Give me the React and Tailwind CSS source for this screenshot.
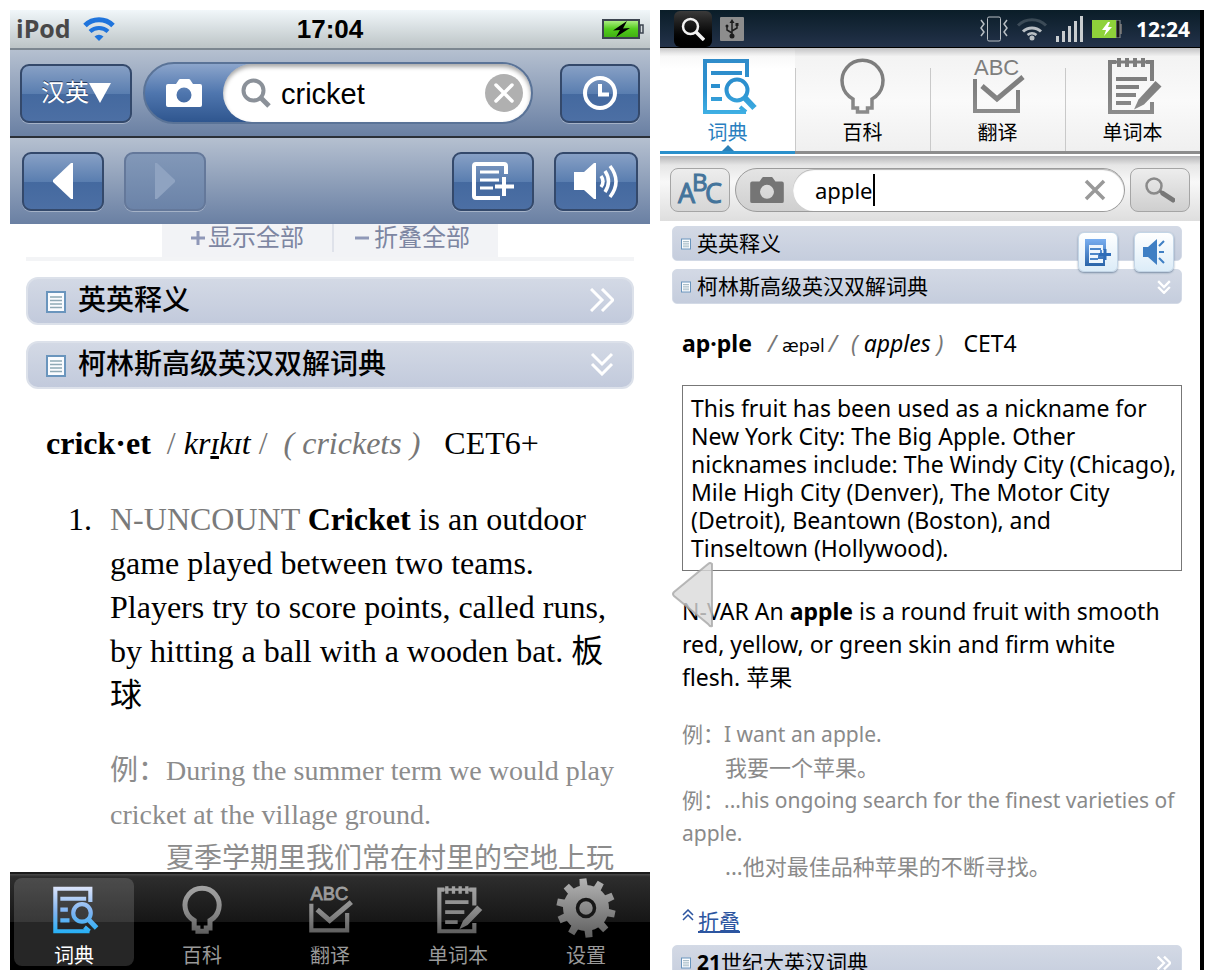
import { useId, useState } from "react";
import clsx from "clsx";

/* ---------- Icons ---------- */

const TONES = {
  glow: ["#dfe6fb", "#7fb4f2", "#27b0f5"],
  dim: ["#a3a3a3", "#8a8a8a", "#5f5f5f"],
  blue: ["#2f8bc9", "#2b90cf", "#3fb0e4"],
  steel: ["#7c7c7c", "#808080", "#8c8c8c"],
};

const TabIcon = ({ tone, className, children }) => {
  const id = useId();
  const [from, via, to] = TONES[tone];
  return (
    <svg viewBox="-2 0 54 57" fill="none" className={clsx("overflow-visible", className)} aria-hidden="true">
      <defs>
        <linearGradient id={id} gradientUnits="userSpaceOnUse" x1="0" y1="0" x2="0" y2="56">
          <stop offset="0" stopColor={from} />
          <stop offset="0.55" stopColor={via} />
          <stop offset="1" stopColor={to} />
        </linearGradient>
      </defs>
      {children(`url(#${id})`)}
    </svg>
  );
};

const DictIcon = ({ bold, ...props }) => (
  <TabIcon {...props}>
    {(paint) => (
      <g stroke={paint} strokeWidth={bold ? 5 : 4}>
        <path d="M44 19V3H2v51h41" />
        <path d="M37 49l6 5M8 15h31M8 28h9M8 41h11" />
        <circle cx="34" cy="32" r="10.5" />
        <path d="M41.5 39.5L51.5 50" strokeWidth="6" />
      </g>
    )}
  </TabIcon>
);

const BulbIcon = ({ bold, ...props }) => (
  <TabIcon {...props}>
    {(paint) => (
      <path
        d="M15 50v-9A20.500 20.500 0 1 1 34 41v9h-4.500v4h-10v-4z"
        stroke={paint}
        strokeWidth={bold ? 6 : 3.5}
      />
    )}
  </TabIcon>
);

const TranslateIcon = ({ bold, ...props }) => (
  <TabIcon {...props}>
    {(paint) => (
      <>
        <text
          x="1"
          y="17"
          fill={paint}
          stroke={bold ? paint : "none"}
          strokeWidth="1"
          fontSize="22"
          fontFamily="Liberation Sans, Arial, sans-serif"
        >
          ABC
        </text>
        <path d="M2 21v32h43V32" stroke={paint} strokeWidth={bold ? 5 : 4} />
        <path d="M9 28l15 13L50 19" stroke={paint} strokeWidth={bold ? 6 : 5} />
      </>
    )}
  </TabIcon>
);

const NotebookIcon = ({ bold, ...props }) => (
  <TabIcon {...props}>
    {(paint) => (
      <g stroke={paint} strokeWidth={bold ? 5 : 4}>
        <path d="M8 4H2v50h42V44M38 4h6v19" />
        <path d="M11 0v9M19 0v9M27 0v9M35 0v9" strokeWidth="4" />
        <path d="M8 4h32" strokeWidth="3" />
        {bold ? (
          <path d="M9 19h28M9 31h23M9 43h15" strokeWidth="4.500" />
        ) : (
          <path d="M8 21h31M8 29h23M8 37h20M8 45h15" strokeWidth="4" />
        )}
        <path d="M47.500 23l6 5.500L36 46.500l-10 5 4.500-10z" fill={paint} stroke="none" />
      </g>
    )}
  </TabIcon>
);

const TEETH = [-6, 30, 66, 102, 138, 174, 210, 246, 282, 318];

const GearIcon = ({ className }) => (
  <svg viewBox="0 0 60 60" className={className} aria-hidden="true">
    <defs>
      <linearGradient id="gear" gradientUnits="userSpaceOnUse" x1="0" y1="0" x2="0" y2="60">
        <stop offset="0" stopColor="#b4b4b4" />
        <stop offset="1" stopColor="#5e5e5e" />
      </linearGradient>
      <mask id="gear-teeth">
        <circle cx="30" cy="30" r="23" fill="#fff" />
        {TEETH.map((angle) => (
          <path key={angle} d="M26 10l.500-9.500h7L34 10z" fill="#fff" transform={`rotate(${angle} 30 30)`} />
        ))}
      </mask>
    </defs>
    <rect width="60" height="60" fill="url(#gear)" mask="url(#gear-teeth)" />
    <circle cx="30" cy="30" r="8.500" fill="none" stroke="#171717" strokeWidth="3.500" />
  </svg>
);

const CameraIcon = ({ className }) => (
  <svg viewBox="0 0 36 30" className={className} fill="currentColor" aria-hidden="true">
    <path
      fillRule="evenodd"
      d="M10 6l3-4.500Q13.500 1 14 1h9q.500 0 1 .500L27 6h7q2 0 2 2v19q0 2-2 2H2q-2 0-2-2V8q0-2 2-2zM18 9.500a7.500 7.500 0 1 0 0 15 7.500 7.500 0 0 0 0-15z"
    />
  </svg>
);

const WifiIcon = ({ className, faded }) => (
  <svg viewBox="0 0 32 24" className={className} fill="none" stroke="currentColor" aria-hidden="true">
    <path d="M2 8.500a20 20 0 0 1 28 0" strokeWidth={faded ? 3 : 5} opacity={faded ? 0.25 : 1} />
    <path d="M7 14.500a13 13 0 0 1 18 0" strokeWidth={faded ? 3 : 4} />
    {faded ? (
      <>
        <path d="M11.500 18a7 7 0 0 1 9 0" strokeWidth="2.500" />
        <circle cx="16" cy="21" r="2.500" fill="currentColor" stroke="none" />
      </>
    ) : (
      <path d="M16 24l-4.500-4.500a7 7 0 0 1 9 0z" fill="currentColor" stroke="none" />
    )}
  </svg>
);

const SheetIcon = ({ className }) => (
  <svg viewBox="0 0 20 22" className={className} fill="none" aria-hidden="true">
    <rect x="1" y="1" width="18" height="20" fill="#fafcff" stroke="#6a95bd" strokeWidth="2" />
    <path d="M4 6h12M4 9.500h12M4 13h12M4 16.500h12" stroke="#8fa9b5" strokeWidth="1.500" />
  </svg>
);

const DoubleChevron = ({ className, direction }) => (
  <svg viewBox="0 0 24 24" className={className} fill="none" stroke="currentColor" aria-hidden="true">
    {direction === "right" && <path d="M1 1l11 11L1 23M12 1l11 11-11 11" />}
    {direction === "down" && <path d="M2 2l10 10L22 2M2 12l10 10 10-10" />}
    {direction === "up" && <path d="M2 12L12 2l10 10M2 22l10-10 10 10" />}
  </svg>
);

const AddNoteIcon = ({ className }) => (
  <svg viewBox="0 0 42 38" className={className} fill="none" stroke="currentColor" aria-hidden="true">
    <path d="M34 12V4q0-2-2-2H4Q2 2 2 4v30q0 2 2 2h24" strokeWidth="4" />
    <path d="M8 10h19M8 18h19M8 26h13" strokeWidth="3" />
    <path d="M32 15v19M23 24.500h19" strokeWidth="4" />
  </svg>
);

/* ---------- Left phone ---------- */

const GlossyButton = ({ label, disabled, className, children }) => (
  <button
    aria-label={label}
    disabled={disabled}
    className={clsx(
      "flex h-[59px] shrink-0 items-center justify-center rounded-[9px] border-2 shadow-[0_1px_0_rgba(255,255,255,0.35)]",
      disabled
        ? "border-[#64789a] bg-linear-to-b from-[#8298b8] to-[#6b83a8] text-[#8fa3c1]"
        : "border-[#34496b] bg-[linear-gradient(#87a0c5,#5a7eb0_50%,#44699f_50%,#4c6fa4)] text-white",
      className
    )}
  >
    {children}
  </button>
);

const Triangle = ({ flip, className }) => (
  <svg viewBox="0 0 20 36" className={clsx(className, flip && "rotate-180")} fill="currentColor" aria-hidden="true">
    <path d="M20 0v36h-2L0 19v-2L18 0z" />
  </svg>
);

const SectionBar = ({ title, direction }) => (
  <button className="flex h-12 w-full items-center rounded-xl border-2 border-[#dce1ea] bg-linear-to-b from-[#d3d9e5] to-[#c2cadc] px-[18px] text-left text-[28px] text-black">
    <SheetIcon className="mt-0.5 mr-3 h-[22px] w-5" />
    <span className="flex-1 leading-9 font-medium">{title}</span>
    <DoubleChevron direction={direction} className="mb-0.5 size-6 stroke-3 text-white" />
  </button>
);

const LEFT_TABS = [
  { name: "词典", Icon: DictIcon },
  { name: "百科", Icon: BulbIcon },
  { name: "翻译", Icon: TranslateIcon },
  { name: "单词本", Icon: NotebookIcon },
];

const IpodPhone = () => {
  const [word, setWord] = useState("cricket");

  return (
    <section className="flex min-w-0 flex-col overflow-hidden bg-white font-['Liberation_Sans','Noto_Sans_CJK_SC',sans-serif]">
      {/* Status bar */}
      <div className="grid h-10 shrink-0 grid-cols-3 items-center border-b-2 border-[#7c8790] bg-linear-to-b from-[#f1f7fa] to-[#bcc4c6] px-1.5">
        <div className="flex items-center gap-3">
          <span className="pb-0.5 font-['Open_Sans',sans-serif] text-[25px] leading-9 font-bold text-[#484848]">iPod</span>
          <WifiIcon className="h-6 w-8 text-[#1f74dc]" />
        </div>
        <span className="text-center text-[26px] leading-9 font-bold">17:04</span>
        <svg viewBox="0 0 42 20" className="h-5 w-[42px] justify-self-end" aria-hidden="true">
          <defs>
            <linearGradient id="cell" x1="0" y1="0" x2="0" y2="1">
              <stop offset="0" stopColor="#b5f08c" />
              <stop offset="0.5" stopColor="#52cc1c" />
              <stop offset="1" stopColor="#3fae12" />
            </linearGradient>
          </defs>
          <rect x="1" y="1" width="36" height="18" fill="url(#cell)" stroke="#3c4450" strokeWidth="2" />
          <rect x="38" y="6" width="3" height="8" fill="#d8dee0" stroke="#3c4450" strokeWidth="1.500" />
          <path d="M25 2L11 11.500l7-.500-4 7 14-9-7 .500z" fill="#000" />
        </svg>
      </div>

      {/* Search bar */}
      <div className="flex h-[88px] shrink-0 items-center border-b-2 border-[#2b3038] bg-linear-to-b from-[#b5c0d0] to-[#6a80a3] px-2.5">
        <GlossyButton className="w-28 text-2xl">
          <span className="[text-shadow:0_-1px_0_#24385a]">汉英</span>
          <svg viewBox="0 0 22 20" className="h-5 w-[22px]" fill="currentColor" aria-hidden="true">
            <path d="M0 0h22L11 20z" />
          </svg>
        </GlossyButton>
        <form className="mr-[27px] ml-[11px] flex h-[62px] min-w-0 flex-1 rounded-full border-2 border-[#5a7397] bg-linear-to-b from-[#8ca5cb] via-[#4f76ae] to-[#2f568f]">
          <button type="button" aria-label="拍照" className="flex w-[78px] shrink-0 items-center justify-center text-white">
            <CameraIcon className="h-[30px] w-9" />
          </button>
          <label className="flex min-w-0 flex-1 items-center gap-2.5 rounded-full bg-white pr-2 pl-[18px] shadow-[inset_0_3px_4px_rgba(0,0,0,0.35)]">
            <svg viewBox="0 0 30 30" className="size-[30px] shrink-0" fill="none" stroke="#8b9199" aria-hidden="true">
              <circle cx="12.500" cy="12.500" r="10" strokeWidth="4" />
              <path d="M19.500 19.500L28 28" strokeWidth="5" />
            </svg>
            <input
              aria-label="查词"
              value={word}
              onChange={(e) => setWord(e.target.value)}
              className="w-full min-w-0 bg-transparent pt-0.5 text-[29px] leading-9 text-black outline-none"
            />
            <button type="button" aria-label="清除" onClick={() => setWord("")}>
              <svg viewBox="0 0 38 38" className="size-[38px]" fill="none" aria-hidden="true">
                <circle cx="19" cy="19" r="19" fill="#b0b0b0" />
                <path d="M11 11l16 16M27 11L11 27" stroke="#fff" strokeWidth="3.500" strokeLinecap="round" />
              </svg>
            </button>
          </label>
        </form>
        <GlossyButton label="历史" className="w-20">
          <svg viewBox="0 0 34 34" className="size-[34px]" fill="none" stroke="currentColor" aria-hidden="true">
            <circle cx="17" cy="17" r="15" strokeWidth="4" />
            <path d="M17 8v10.500h9" strokeWidth="4" />
          </svg>
        </GlossyButton>
      </div>

      {/* Word toolbar */}
      <div className="flex h-[86px] shrink-0 items-center gap-5 bg-linear-to-b from-[#b5c0d0] to-[#6a80a3] px-3">
        <GlossyButton label="后退" className="w-[82px]">
          <Triangle className="h-9 w-5" />
        </GlossyButton>
        <GlossyButton label="前进" disabled className="w-[82px]">
          <Triangle flip className="h-9 w-5" />
        </GlossyButton>
        <div className="flex-1" />
        <GlossyButton label="加入单词本" className="w-[82px]">
          <AddNoteIcon className="h-[38px] w-[42px]" />
        </GlossyButton>
        <GlossyButton label="发音" className="w-[84px]">
          <svg viewBox="0 0 44 38" className="h-[38px] w-11" fill="none" stroke="currentColor" aria-hidden="true">
            <path d="M0 10h10L20 1h2v36h-2L10 28H0z" fill="currentColor" stroke="none" />
            <path d="M27 14q4 5.500 0 11M31 9q7 10.500 0 21M36 4q12 15.500 0 31" strokeWidth="3.500" />
          </svg>
        </GlossyButton>
      </div>

      {/* Article */}
      <main className="min-h-0 flex-1 overflow-hidden px-4">
        <div className="flex justify-center border-b-4 border-[#f3f4f6]">
          <div className="flex h-[33px] items-start bg-[#f2f3f6] px-7 text-2xl text-[#7d86a2]">
            <button className="flex items-center leading-7">
              <svg viewBox="0 0 16 16" className="mr-0.5 size-4" stroke="#8f98b8" strokeWidth="3" aria-hidden="true">
                <path d="M8 1v14M1 8h14" />
              </svg>
              显示全部
            </button>
            <span className="mr-5 ml-7 h-7 w-0.5 bg-[#dfe2ea]" />
            <button className="flex items-center leading-7">
              <svg viewBox="0 0 16 16" className="mr-1 size-4" stroke="#8f98b8" strokeWidth="3" aria-hidden="true">
                <path d="M1 8h14" />
              </svg>
              折叠全部
            </button>
          </div>
        </div>

        <div className="mt-4 flex flex-col gap-4">
          <SectionBar title="英英释义" direction="right" />
          <SectionBar title="柯林斯高级英汉双解词典" direction="down" />
        </div>

        <div className="px-5 font-['Liberation_Serif','Noto_Sans_CJK_SC',serif] text-black">
          <h1 className="mt-8 flex items-baseline text-[32px] leading-[44px]">
            <b>crick·et</b>
            <span className="ml-4 text-[#777]">/</span>
            <i className="mx-2">
              kr<u>ɪ</u>kɪt
            </i>
            <span className="text-[#777]">/</span>
            <i className="ml-4 text-[#777]">( crickets )</i>
            <span className="ml-6">CET6+</span>
          </h1>
          <div className="mt-8 flex text-[32px] leading-[44px]">
            <span className="w-16 shrink-0 pl-[22px]">1.</span>
            <div>
              <p>
                <span className="text-[#7a7a7a]">N-UNCOUNT</span> <b>Cricket</b> is an outdoor game played between two
                teams. Players try to score points, called runs, by hitting a ball with a wooden bat. 板球
              </p>
              <p className="mt-8 text-[28px] text-[#8c8c8c]">
                例：During the summer term we would play cricket at the village ground.
              </p>
              <p className="pl-14 text-[28px] text-[#8c8c8c]">夏季学期里我们常在村里的空地上玩</p>
            </div>
          </div>
        </div>
      </main>

      {/* Tab bar */}
      <nav className="flex h-[98px] shrink-0 border-t-2 border-[#1c1c1c] bg-[linear-gradient(#4a4a4a,#2d2d2d_3%,#161616_50%,#000_50%)]">
        {LEFT_TABS.map(({ name, Icon }, i) => (
          <div key={name} className="flex flex-1 px-1 py-1">
            <button
              className={clsx(
                "flex flex-1 flex-col items-center rounded-lg pt-2 text-xl",
                i === 0 ? "bg-white/15 text-white" : "text-[#999]"
              )}
            >
              <Icon tone={i === 0 ? "glow" : "dim"} bold className="h-12 w-[45px] shrink-0" />
              <span className="mt-2 leading-7">{name}</span>
            </button>
          </div>
        ))}
        <div className="flex flex-1 px-1 py-1">
          <button className="flex flex-1 flex-col items-center text-xl text-[#999]">
            <GearIcon className="size-[60px] shrink-0" />
            <span className="mt-1 leading-7">设置</span>
          </button>
        </div>
      </nav>
    </section>
  );
};

/* ---------- Right phone ---------- */

const RIGHT_TABS = [
  { name: "词典", Icon: DictIcon },
  { name: "百科", Icon: BulbIcon },
  { name: "翻译", Icon: TranslateIcon },
  { name: "单词本", Icon: NotebookIcon },
];

const SlimBar = ({ title, direction }) => (
  <button className="flex h-[35px] w-full items-center rounded-[5px] border border-[#d3dae6] bg-linear-to-b from-[#d3d9e5] to-[#c5cddd] pr-2.5 pl-2 text-left text-[21px] text-black">
    <SheetIcon className="mr-1.5 h-3 w-2.5" />
    <span className="flex-1 pb-0.5 leading-7">{title}</span>
    {direction && <DoubleChevron direction={direction} className="size-3.5 stroke-4 text-white" />}
  </button>
);

const FloatButton = ({ label, children }) => (
  <button
    aria-label={label}
    className="flex size-10 items-center justify-center rounded-md border border-[#c3d5e6] bg-linear-to-b from-white to-[#dcecf8] text-[#3f7fc4] shadow-[0_1px_2px_rgba(60,90,120,0.6)]"
  >
    {children}
  </button>
);

const AndroidPhone = () => {
  const [word, setWord] = useState("apple");

  return (
    <section className="relative flex min-w-0 flex-col overflow-hidden border-r-4 border-black bg-white font-['Noto_Sans','Noto_Sans_CJK_SC',sans-serif]">
      {/* Status bar */}
      <div className="flex h-[38px] shrink-0 items-center border-b border-black bg-linear-to-b from-[#0a1d28] to-[#23324a] px-2.5 text-[#b9bfc4]">
        <div className="ml-1 flex h-9 w-[38px] items-center justify-center rounded-md bg-linear-to-b from-[#3a3a3a] to-black">
          <svg viewBox="0 0 24 24" className="size-6" fill="none" stroke="#f2f2f2" aria-hidden="true">
            <circle cx="9.500" cy="9.500" r="7.500" strokeWidth="2.500" />
            <path d="M15 15l8 8" strokeWidth="3.500" />
          </svg>
        </div>
        <svg viewBox="0 0 24 24" className="ml-2 size-6" fill="none" aria-hidden="true">
          <rect width="24" height="24" rx="1" fill="#8d8d8d" />
          <path d="M12 5v14M12 16l-5-3V9M12 14l5-3V8" stroke="#1d1d1d" strokeWidth="1.500" />
          <path d="M12 2l2.500 4h-5z" fill="#1d1d1d" />
          <circle cx="12" cy="19" r="2.500" fill="#1d1d1d" />
          <circle cx="7" cy="9" r="1.500" fill="#1d1d1d" />
          <path d="M15.500 6h3v3h-3z" fill="#1d1d1d" />
        </svg>
        <div className="flex-1" />
        <svg viewBox="0 0 28 26" className="h-[26px] w-7" fill="none" stroke="currentColor" aria-hidden="true">
          <rect x="7.500" y="1" width="13" height="24" rx="1.500" strokeWidth="1" />
          <path d="M1 4l3 4-3 4 3 4-3 4M27 4l-3 4 3 4-3 4 3 4" strokeWidth="1.500" />
        </svg>
        <WifiIcon faded className="ml-2 h-6 w-8" />
        <svg viewBox="0 0 28 26" className="ml-2 h-[26px] w-7" fill="#c9cdd0" aria-hidden="true">
          <path d="M0 20h3v6H0zM6 15h3v11H6zM12 10h3v16h-3zM18 5h3v21h-3zM24 0h3v26h-3z" />
        </svg>
        <svg viewBox="0 0 30 18" className="ml-2 h-[18px] w-[30px]" aria-hidden="true">
          <path d="M27 4h3v10h-3z" fill="#666" />
          <rect x="24" width="4" height="18" fill="#1a1a1a" stroke="#8d9499" />
          <rect width="24" height="18" fill="#8ed23a" />
          <path d="M16 2l-6 8h4l-2 6 8-9h-4l2-5z" fill="#fff" />
        </svg>
        <span className="ml-3.5 text-[21px] leading-8 font-bold text-white">12:24</span>
      </div>

      {/* Tabs */}
      <nav className="flex h-[106px] shrink-0 bg-[linear-gradient(#c2c2c4,#f3f3f3_8%,#fafafa_50%,#efefef)]">
        {RIGHT_TABS.map(({ name, Icon }, i) => (
          <button
            key={name}
            className={clsx(
              "relative flex flex-1 flex-col items-center border-b-3 pt-2.5 text-xl",
              i === 0
                ? "border-[#2b90cb] bg-linear-to-b from-transparent to-white to-20% text-[#2a7fc0]"
                : "border-[#8d8d8d] text-black"
            )}
          >
            {i > 0 && <span className="absolute top-5 bottom-0 left-0 w-px bg-[#c9c9c9]" />}
            <Icon tone={i === 0 ? "blue" : "steel"} className="h-[57px] w-[54px]" />
            <span className="mt-1 leading-7">{name}</span>
            {i === 0 && (
              <svg viewBox="0 0 12 6" className="absolute bottom-0 h-1.5 w-3" fill="#2b80b8" aria-hidden="true">
                <path d="M0 6l6-6 6 6z" />
              </svg>
            )}
          </button>
        ))}
      </nav>

      {/* Search bar */}
      <div className="flex h-[67px] shrink-0 items-center gap-[5px] border-t-2 border-white bg-[linear-gradient(#b5b5b7,#e6e6e6_14%,#f8f8f8_40%,#dedede)] px-2.5 pt-0.5">
        <button
          aria-label="ABC"
          className="h-11 w-[60px] shrink-0 rounded-lg border border-[#a5a5a5] bg-linear-to-b from-[#ededed] to-[#d6d6d6] text-[#44749b]"
        >
          <svg viewBox="0 0 46 36" className="mx-auto h-9 w-[46px] overflow-visible" fill="currentColor" aria-hidden="true">
            <g fontFamily="Open Sans, sans-serif" stroke="currentColor" strokeWidth="1">
              <text x="1" y="31" fontSize="27">A</text>
              <text x="15" y="19" fontSize="24">B</text>
              <text x="28" y="31" fontSize="27">C</text>
            </g>
          </svg>
        </button>
        <form className="flex h-11 min-w-0 flex-1 rounded-full border border-[#9b9b9b] bg-linear-to-b from-[#e4e4e4] to-[#cfcfcf]">
          <button type="button" aria-label="拍照" className="flex w-[57px] shrink-0 items-center justify-center text-[#757575]">
            <CameraIcon className="ml-1 h-7 w-[34px]" />
          </button>
          <div className="flex min-w-0 flex-1 items-center rounded-full bg-white pr-[18px] pl-[22px] shadow-[inset_0_1px_1px_rgba(0,0,0,0.3)]">
            <input
              aria-label="查词"
              value={word}
              onChange={(e) => setWord(e.target.value)}
              className="field-sizing-content bg-transparent text-[22px] leading-8 text-black outline-none"
            />
            <span className="h-8 w-0.5 bg-black" />
            <button type="button" aria-label="清除" onClick={() => setWord("")} className="ml-auto">
              <svg viewBox="0 0 22 22" className="size-[22px]" stroke="#999" strokeWidth="3.500" aria-hidden="true">
                <path d="M2 2l18 18M20 2L2 20" />
              </svg>
            </button>
          </div>
        </form>
        <button
          aria-label="搜索"
          className="flex h-11 w-[60px] shrink-0 items-center justify-center rounded-lg border border-[#a5a5a5] bg-linear-to-b from-[#ededed] to-[#cfcfcf]"
        >
          <svg viewBox="0 0 30 26" className="h-[26px] w-[30px]" fill="none" aria-hidden="true">
            <circle cx="9" cy="9" r="7.500" stroke="#8a8a8a" strokeWidth="2.500" />
            <path d="M15 14l3 2.500" stroke="#777" strokeWidth="3" />
            <path d="M18 16.500l10 6.500" stroke="#777" strokeWidth="5" strokeLinecap="round" />
          </svg>
        </button>
      </div>

      {/* Article */}
      <main className="relative min-h-0 flex-1 overflow-hidden pt-[5px] pr-[18px] pl-3 text-black">
        <div className="flex flex-col gap-2">
          <SlimBar title="英英释义" />
          <SlimBar title="柯林斯高级英汉双解词典" direction="down" />
        </div>
        <div className="absolute top-[11px] right-[26px] flex gap-4">
          <FloatButton label="加入单词本">
            <svg viewBox="0 0 26 28" className="h-7 w-[26px]" fill="none" aria-hidden="true">
              <defs>
                <linearGradient id="note" x1="0" y1="0" x2="0" y2="1">
                  <stop offset="0" stopColor="#79aef0" />
                  <stop offset="1" stopColor="#2a64a8" />
                </linearGradient>
              </defs>
              <path d="M0 1h21v11h-4v6h3v10H0z" fill="url(#note)" />
              <path d="M4 7h14v5h-3v3h-2v6h5v4H4z" fill="#eef6fd" />
              <path d="M5 11h11M5 16h8M5 21h8" stroke="#4d87c9" strokeWidth="2" />
              <path d="M20 11v11M14 16.500h12" stroke="#2f6db8" strokeWidth="3" />
            </svg>
          </FloatButton>
          <FloatButton label="发音">
            <svg viewBox="0 0 24 28" className="h-7 w-6" fill="none" stroke="currentColor" aria-hidden="true">
              <path d="M1 9h5l9-8v26l-9-8H1z" fill="currentColor" stroke="none" />
              <path d="M17 14h5M17 8l5-5M17 20l5 5" strokeWidth="2" />
            </svg>
          </FloatButton>
        </div>

        <div className="pl-2.5 text-[23px]">
          <h1 className="mt-[23px] flex items-baseline leading-8">
            <b>ap·ple</b>
            <i className="ml-4 text-[#777]">/</i>
            <span className="mr-1 ml-1.5 font-['DejaVu_Sans',sans-serif] text-[17px]">æpəl</span>
            <i className="text-[#777]">/</i>
            <i className="ml-3.5 text-[#777]">(</i>
            <i className="mx-1.5">apples</i>
            <i className="text-[#777]">)</i>
            <span className="ml-5">CET4</span>
          </h1>
          <p className="mt-[23px] border border-[#777] py-2 pr-0.5 pl-2 leading-7">
            This fruit has been used as a nickname for New York City: The Big Apple. Other nicknames include: The Windy
            City (Chicago), Mile High City (Denver), The Motor City (Detroit), Beantown (Boston), and
            <br />
            Tinseltown (Hollywood).
          </p>
          <p className="mt-6 pr-2 leading-[33px]">
            N-VAR An <b>apple</b> is a round fruit with smooth red, yellow, or green skin and firm white flesh. 苹果
          </p>
          <div className="mt-6 text-[22px] leading-[33px] text-[#8a8a8a]">
            <p className="text-[21px]">例：I want an apple.</p>
            <p className="pl-[43px]">我要一个苹果。</p>
            <p className="text-[21px]">例：...his ongoing search for the finest varieties of apple.</p>
            <p className="pl-[43px]">...他对最佳品种苹果的不断寻找。</p>
          </div>
          <a href="#fold" className="mt-[22px] flex text-[21px] leading-8 text-[#2c55a0]">
            <DoubleChevron direction="up" className="mt-1 mr-1 size-3 stroke-3" />
            <span className="underline">折叠</span>
          </a>
        </div>
        <div className="mt-2">
          <SlimBar
            title={
              <>
                <b>21</b>世纪大英汉词典
              </>
            }
            direction="right"
          />
        </div>

        {/* Page-back arrow floating over the text */}
        <button aria-label="上一个" className="absolute top-[341px] left-3">
          <svg viewBox="0 0 42 66" className="h-[66px] w-[42px]" aria-hidden="true">
            <path
              d="M40 2v62Q38 65 36 62L2 34q-2-2 0-4L36 2q2-2 4 0z"
              fill="#d9d9d9"
              fillOpacity="0.8"
              stroke="#a8a8a8"
              strokeOpacity="0.8"
              strokeWidth="2"
            />
          </svg>
        </button>
      </main>
    </section>
  );
};

export default function App() {
  return (
    <div className="grid h-screen grid-cols-[640fr_544fr] gap-2.5 bg-white p-2.5">
      <IpodPhone />
      <AndroidPhone />
    </div>
  );
}
